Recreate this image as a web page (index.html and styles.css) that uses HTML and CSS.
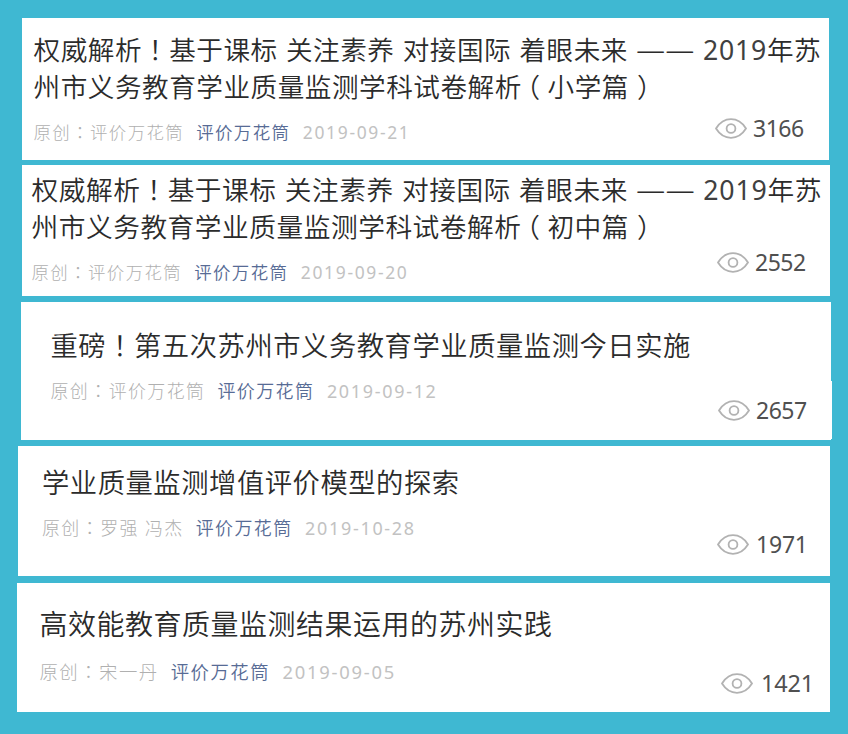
FILE: index.html
```
<!DOCTYPE html>
<html lang="zh-CN">
<head>
	<meta charset="utf-8" />
	<meta name="viewport" content="width=device-width, initial-scale=1" />
	<title>评价万花筒</title>
	<link rel="stylesheet" href="styles.css">
</head>
<body>
	<!-- one eye shape, reused by every card -->
	<svg class="sprite" width="0" height="0">
		<symbol id="eye" viewBox="0 0 32 21">
			<path d="M1 10.5C4.8 4.4 9.8 1.2 16 1.2S27.2 4.4 31 10.5C27.2 16.6 22.2 19.8 16 19.8S4.8 16.6 1 10.5Z" />
			<circle cx="16" cy="10.5" r="4.4" />
		</symbol>
	</svg>
	<div class="list">
		<article class="card card-primary">
			<h2>权威解析<span class="mark" lang="zh-TW">！</span>基于课标 关注素养 对接国际 着眼未来 <span class="dash">——</span> <span class="year">2019</span>年苏<br>州市义务教育学业质量监测学科试卷解析<span class="open">（</span>小学篇<span class="close">）</span></h2>
			<div class="info">
				<span class="author">原创<span class="mark" lang="zh-TW">：</span>评价万花筒</span>
				<a class="account">评价万花筒</a>
				<span class="date">2019-09-21</span>
				<span class="views"><svg class="eye"><use href="#eye" /></svg>3166</span>
			</div>
		</article>
		<article class="card card-middle">
			<h2>权威解析<span class="mark" lang="zh-TW">！</span>基于课标 关注素养 对接国际 着眼未来 <span class="dash">——</span> <span class="year">2019</span>年苏<br>州市义务教育学业质量监测学科试卷解析<span class="open">（</span>初中篇<span class="close">）</span></h2>
			<div class="info">
				<span class="author">原创<span class="mark" lang="zh-TW">：</span>评价万花筒</span>
				<a class="account">评价万花筒</a>
				<span class="date">2019-09-20</span>
				<span class="views"><svg class="eye"><use href="#eye" /></svg>2552</span>
			</div>
		</article>
		<article class="card card-fifth">
			<h2>重磅<span class="mark" lang="zh-TW">！</span>第五次苏州市义务教育学业质量监测今日实施</h2>
			<div class="info">
				<span class="author">原创<span class="mark" lang="zh-TW">：</span>评价万花筒</span>
				<a class="account">评价万花筒</a>
				<span class="date">2019-09-12</span>
				<span class="views"><svg class="eye"><use href="#eye" /></svg>2657</span>
			</div>
		</article>
		<article class="card card-model">
			<h2>学业质量监测增值评价模型的探索</h2>
			<div class="info">
				<span class="author">原创<span class="mark" lang="zh-TW">：</span>罗强 冯杰</span>
				<a class="account">评价万花筒</a>
				<span class="date">2019-10-28</span>
				<span class="views"><svg class="eye"><use href="#eye" /></svg>1971</span>
			</div>
		</article>
		<article class="card card-practice">
			<h2>高效能教育质量监测结果运用的苏州实践</h2>
			<div class="info">
				<span class="author">原创<span class="mark" lang="zh-TW">：</span>宋一丹</span>
				<a class="account">评价万花筒</a>
				<span class="date">2019-09-05</span>
				<span class="views"><svg class="eye"><use href="#eye" /></svg>1421</span>
			</div>
		</article>
	</div>
</body>
</html>
```
FILE: styles.css
```
* {
    box-sizing: border-box;
}

body {
    margin: 0;
    background-color: #3fb8d2;
    font-family: "Noto Sans", "Noto Sans CJK SC", sans-serif;
}

.sprite {
    position: absolute;
}

.list {
    height: 734px;
    padding-top: 18px;
    overflow: hidden;
}

.card {
    background-color: #fff;
    white-space: nowrap;
}

.card h2 {
    margin: 0 0 15px;
    font-weight: 350;
    line-height: 36px;
    letter-spacing: 0.02em;
    word-spacing: 0.8px;
    color: #2b2b2b;
}

/* full width marks sit in the middle of their cell */
.mark {
    font-family: "Noto Sans CJK TC", sans-serif;
    line-height: 1;
}

.dash {
    font-size: 1.08em;
    line-height: 1;
}

.year {
    font-weight: 400;
    letter-spacing: 0.03em;
    color: #404040;
}

/* half width brackets, spaced out by hand */
.open,
.close {
    font-feature-settings: "halt";
}

.open {
    margin: 0 7px 0 5px;
}

.close {
    margin-left: 8px;
}

.info {
    display: flex;
    align-items: flex-start;
    height: 24px;
    line-height: 24px;
    font-weight: 300;
    letter-spacing: 0.08em;
    color: #b0b0b0;
}

.account {
    margin-left: 12px;
    font-weight: 350;
    color: #576b95;
}

.date {
    margin-left: 12.5px;
    font-weight: 400;
    letter-spacing: 0.095em;
    color: #c2c2c2;
}

.views {
    display: flex;
    align-items: center;
    gap: 6px;
    width: 93px;
    margin-left: auto;
    font-size: 23px;
    font-weight: 400;
    letter-spacing: -0.5px;
    color: #505050;
}

.eye {
    width: 32px;
    height: 21px;
    fill: none;
    stroke: #b2b2b2;
    stroke-width: 1.8;
}

.card-primary {
    width: 807px;
    height: 142px;
    margin: 0 0 5px 22px;
    padding: 14px 21px 0 11.5px;
}

.card-middle {
    width: 808px;
    height: 131px;
    margin: 0 0 6px 22px;
    padding: 7px 20px 0 9.5px;
}

.card-primary h2,
.card-middle h2 {
    font-size: 26.6px;
    line-height: 36.5px;
}

.card-middle h2 {
    font-size: 26.7px;
}

.card-primary .info,
.card-middle .info {
    font-size: 17.45px;
}

.card-primary .views,
.card-middle .views {
    font-size: 23px;
}

.card-primary .views {
    margin-top: -4px;
}

.card-middle .views {
    margin-top: -10px;
}

.card-fifth {
    position: relative;
    width: 810px;
    height: 138px;
    margin: 0 0 6px 21px;
    padding: 26px 20px 0 29.5px;
}

/* the lower part of this card is one pixel wider */
.card-fifth::after {
    content: "";
    position: absolute;
    top: 79px;
    right: -1px;
    width: 1px;
    height: 58px;
    background-color: #fff;
}

.card-fifth h2,
.card-model h2 {
    font-size: 27.3px;
}

.card-fifth .info,
.card-model .info {
    font-size: 17.95px;
}

.card-fifth .views,
.card-model .views {
    font-size: 23px;
}

.card-fifth .views {
    margin-top: 19px;
}

.card-model {
    width: 812px;
    height: 130px;
    margin: 0 0 7px 18px;
    padding: 19px 20px 0 24px;
}

.card-model .views {
    gap: 7px;
    margin-top: 16px;
    letter-spacing: -0.2px;
}

.card-practice {
    width: 813px;
    height: 129px;
    margin-left: 17px;
    padding: 23px 16px 0 22.5px;
}

.card-practice h2 {
    margin-bottom: 18px;
    font-size: 27.95px;
}

.card-practice .info {
    font-size: 18.4px;
}

.card-practice .views {
    gap: 8px;
    margin-top: 11px;
    font-size: 23.5px;
    letter-spacing: -0.2px;
}
```
